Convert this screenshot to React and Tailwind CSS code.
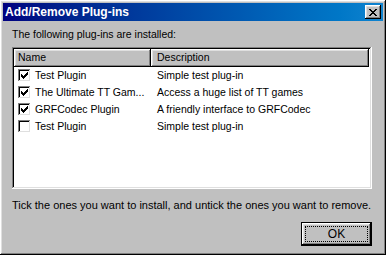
const plugins = [
  { name: 'Test Plugin', desc: 'Simple test plug-in', on: true },
  { name: 'The Ultimate TT Gam...', desc: 'Access a huge list of TT games', on: true },
  { name: 'GRFCodec Plugin', desc: 'A friendly interface to GRFCodec', on: true },
  { name: 'Test Plugin', desc: 'Simple test plug-in', on: false },
]

const raised =
  'shadow-[inset_-1px_-1px_#000,inset_1px_1px_#fff,inset_-2px_-2px_#808080,inset_2px_2px_#dfdfdf]'
const sunken =
  'shadow-[inset_-1px_-1px_#fff,inset_1px_1px_#808080,inset_-2px_-2px_#dfdfdf,inset_2px_2px_#000]'

function CheckMark() {
  return (
    <svg width="7" height="7" viewBox="0 0 7 7" shapeRendering="crispEdges">
      <path
        fill="#000"
        d="M6 0h1v1H6zM5 1h2v1H5zM0 2h1v1H0zM4 2h3v1H4zM0 3h2v1H0zM3 3h3v1H3zM0 4h5v1H0zM1 5h3v1H1zM2 6h1v1H2z"
      />
    </svg>
  )
}

function CloseGlyph() {
  return (
    <svg width="8" height="7" viewBox="0 0 8 7" shapeRendering="crispEdges">
      <path
        fill="#000"
        d="M0 0h2v1H0zM6 0h2v1H6zM1 1h2v1H1zM5 1h2v1H5zM2 2h4v1H2zM3 3h2v1H3zM2 4h4v1H2zM1 5h2v1H1zM5 5h2v1H5zM0 6h2v1H0zM6 6h2v1H6z"
      />
    </svg>
  )
}

export default function App() {
  return (
    <div
      className={`w-[386px] h-[255px] bg-[#c0c0c0] p-[3px] flex flex-col text-[11px] leading-[13px] text-black ${raised}`}
      style={{ fontFamily: '"Liberation Sans", Arial, sans-serif' }}
    >
      {/* Title bar */}
      <div className="h-[18px] flex items-center justify-between pl-[2px] pr-[2px] bg-gradient-to-r from-[#000080] to-[#1084d0]">
        <span className="text-white font-bold text-[12px] leading-[14px]">Add/Remove Plug-ins</span>
        <div className={`w-[16px] h-[14px] bg-[#c0c0c0] flex items-center justify-center ${raised}`}>
          <CloseGlyph />
        </div>
      </div>

      {/* Body */}
      <div className="flex-1 flex flex-col pl-[9px] pr-[11px] pt-[7px]">
        <div className="text-[10.5px]">The following plug-ins are installed:</div>

        <div className={`mt-[6px] h-[142px] bg-white p-[2px] text-[10.5px] ${sunken}`}>
          <div className="flex h-[18px]">
            <div className={`w-[137px] bg-[#c0c0c0] pl-[4px] pb-[1px] flex items-center ${raised}`}>Name</div>
            <div className={`w-[218px] bg-[#c0c0c0] pl-[6px] pb-[1px] flex items-center ${raised}`}>Description</div>
          </div>
          {plugins.map((p, i) => (
            <div key={i} className="flex h-[17px] items-center">
              <div className="w-[137px] flex items-center pl-[4px]">
                <div className={`w-[13px] h-[13px] bg-white flex items-center justify-center ${sunken}`}>
                  {p.on && <CheckMark />}
                </div>
                <span className="ml-[4px] whitespace-nowrap">{p.name}</span>
              </div>
              <div className="pl-[6px] whitespace-nowrap">{p.desc}</div>
            </div>
          ))}
        </div>

        <div className="mt-[10px]">
          Tick the ones you want to install, and untick the ones you want to remove.
        </div>

        <div className="mt-[10px] flex justify-end">
          <div className="w-[71px] h-[24px] border border-black">
            <div className={`w-full h-full bg-[#c0c0c0] p-[3px] ${raised}`}>
              <div className="w-full h-full border border-dotted border-black flex items-center justify-center text-[12px]">
                OK
              </div>
            </div>
          </div>
        </div>
      </div>
    </div>
  )
}
